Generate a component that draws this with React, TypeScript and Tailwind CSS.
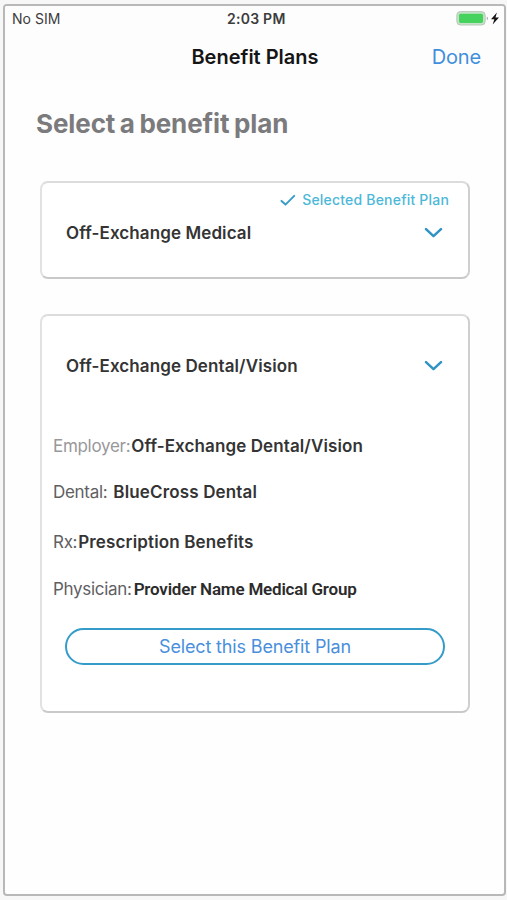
import type { ReactNode } from 'react'

function Chevron() {
  return (
    <svg className="h-3 w-[19px]" viewBox="0 0 19 12" fill="none">
      <path d="M2 2.2 9.5 9.2 17 2.2" stroke="#2f94c4" strokeWidth="2.5" strokeLinecap="round" strokeLinejoin="round" />
    </svg>
  )
}

function StatusBar() {
  return (
    <div className="relative flex h-[25px] items-center justify-between pr-[3px] pl-[7px] text-[#3c3c3c]">
      <span className="text-[14px] leading-none tracking-[0.05px]">No SIM</span>
      <span className="absolute left-[222px] text-[14px] leading-none font-semibold tracking-[0.25px] whitespace-nowrap">
        2:03 PM
      </span>
      <svg className="h-4 w-[45px]" viewBox="0 0 45 16">
        <rect x="0.8" y="0.6" width="28.4" height="13.4" rx="3.6" fill="#c5e2c8" stroke="#b4c4b5" strokeWidth="0.9" />
        <rect x="3" y="2.7" width="24" height="9.2" rx="1.6" fill="#45d35e" />
        <path d="M30.8 5.4c1.5.6 1.5 3.2 0 3.8z" fill="#9aa79c" />
        <path d="M40.9 1.6 35 8.3h3.3L36.7 13.6 43 6.6h-3.5z" fill="#151515" />
      </svg>
    </div>
  )
}

function PlanHeader({ title }: { title: string }) {
  return (
    <div className="flex items-center justify-between pr-[25px] pl-6">
      <h2 className="text-[17px] leading-6 font-semibold tracking-[0.1px] text-[#343434]">{title}</h2>
      <Chevron />
    </div>
  )
}

function Detail({ label, children }: { label: ReactNode; children: ReactNode }) {
  return (
    <div className="flex h-6 items-center text-[17px] leading-6 whitespace-nowrap text-[#606063]">
      <span className="tracking-[-0.3px]">{label}</span>
      {children}
    </div>
  )
}

export default function App() {
  return (
    <div className="h-[900px] w-[507px] bg-[#f7f7f7] pt-1 pl-[3px] font-['Inter',sans-serif]">
      <div className="h-[892px] w-[503px] overflow-hidden rounded-[4px] border-2 border-[#b8b8b8] bg-[#fefefe]">
        <div className="h-[75px] bg-[#fefdfe]">
          <StatusBar />
          <div className="relative flex h-[52px] items-center">
            <h1 className="w-full pl-px text-center text-[20px] font-semibold text-[#151515]">Benefit Plans</h1>
            <button className="absolute right-[23px] text-[20px] tracking-[-0.15px] text-[#3f8fdc]">Done</button>
          </div>
        </div>

        <main className="px-[35px]">
          <h1 className="-ml-1 pt-[27px] text-[26px] leading-8 font-bold tracking-[-0.1px] [word-spacing:-1.5px] text-[#7b7b7d]">
            Select a benefit plan
          </h1>

          {/* Current plan */}
          <section className="mt-[41px] h-[98px] w-[430px] rounded-[8px] border-2 border-t-[#dcdcdc] border-r-[#cfcfcf] border-b-[#c9c9c9] border-l-[#e2e2e2] bg-white pt-[7px]">
            <div className="flex h-5 items-center justify-end pr-[19px] text-[#4cb8d8]">
              <svg className="mr-[6px] h-3 w-4" viewBox="0 0 16 12" fill="none">
                <path d="m1.5 6.9 4 3.7L14.2 1.9" stroke="#3a9dc9" strokeWidth="2" strokeLinecap="round" strokeLinejoin="round" />
              </svg>
              <span className="text-[14px] leading-5 font-medium tracking-[0.2px]">Selected Benefit Plan</span>
            </div>
            <div className="pt-[11px]">
              <PlanHeader title="Off-Exchange Medical" />
            </div>
          </section>

          {/* Available plan */}
          <section className="mt-[35px] h-[399px] w-[430px] rounded-[8px] border-2 border-t-[#dcdcdc] border-r-[#cfcfcf] border-b-[#c9c9c9] border-l-[#e2e2e2] bg-white pt-[38px]">
            <PlanHeader title="Off-Exchange Dental/Vision" />
            <div className="pt-14 pl-[11px]">
              <div className="mb-[22px]">
                <Detail label={<span className="text-[#98989b]">Employer:</span>}>
                  <b className="ml-px font-semibold tracking-[0.1px] text-[#343434]">Off-Exchange Dental/Vision</b>
                </Detail>
              </div>
              <div className="mb-[26px]">
                <Detail label="Dental:">
                  <b className="ml-[6px] font-semibold tracking-[0.15px] text-[#343434]">BlueCross Dental</b>
                </Detail>
              </div>
              <div className="mb-[23px]">
                <Detail label="Rx:">
                  <b className="ml-px font-semibold tracking-[0.15px] text-[#343434]">Prescription Benefits</b>
                </Detail>
              </div>
              <Detail label="Physician:">
                <b className="ml-[2px] font-['Roboto',sans-serif] font-semibold tracking-[-0.2px] text-[#2b2b2b]">
                  Provider Name Medical Group
                </b>
              </Detail>
            </div>
            <button className="mt-[27px] ml-[23px] flex h-[37px] w-[380px] items-center justify-center rounded-full border-2 border-[#359cc9] text-[18px] tracking-[-0.15px] text-[#4a8fdc]">
              Select this Benefit Plan
            </button>
          </section>
        </main>
      </div>
    </div>
  )
}
